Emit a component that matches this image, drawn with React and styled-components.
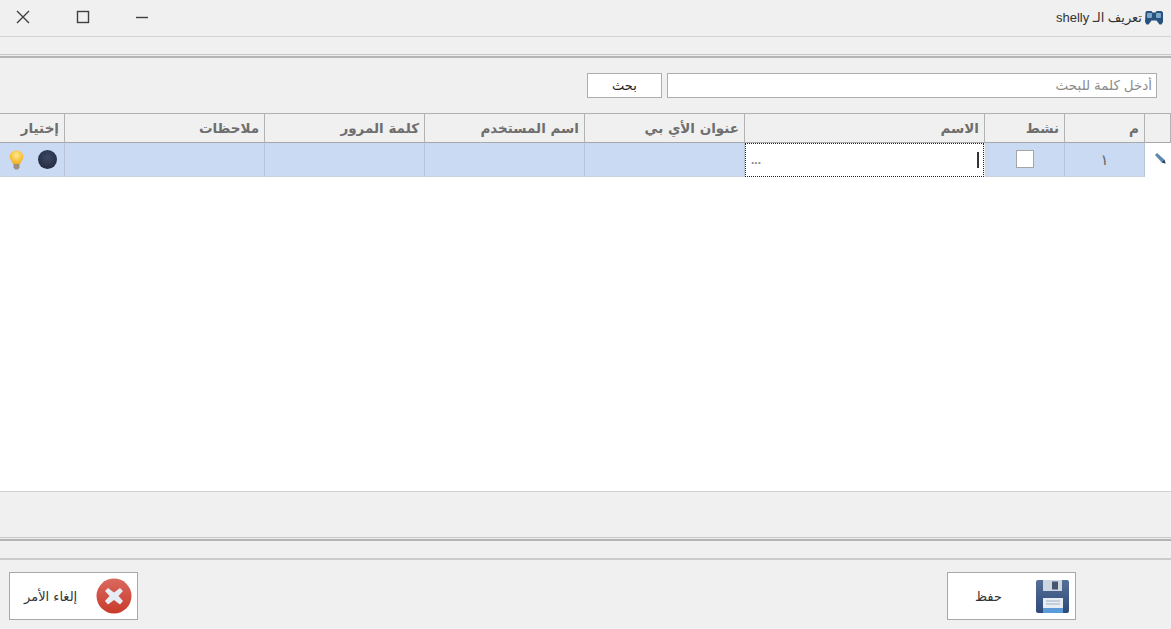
import React from "react";
import styled, { createGlobalStyle } from "styled-components";

const Global = createGlobalStyle`
  html, body { margin: 0; padding: 0; background: #f0f0f0; }
  * { box-sizing: border-box; }
  body { font-family: "DejaVu Sans", "Liberation Sans", sans-serif; }
`;

const Page = styled.div`
  width: 1171px; height: 629px; display: flex; flex-direction: column;
  background: #f0f0f0; overflow: hidden;
`;
const TitleBar = styled.div`
  height: 37px; flex: none; display: flex; align-items: center; justify-content: space-between;
  border-bottom: 1px solid #d4d4d4; padding: 0 8px 2px 15px;
`;
const WinButtons = styled.div`display: flex; gap: 44px; align-items: center;`;
const WinButton = styled.svg`width: 16px; height: 16px; display: block; fill: none; stroke: #3f3f3f; stroke-width: 1.4;`;
const Title = styled.div`
  display: flex; align-items: center; gap: 3px; font-size: 13px; color: #333;
  font-family: "Liberation Sans", "DejaVu Sans", sans-serif;
`;
const Strip = styled.div`height: ${p => p.$h}px; flex: none;`;
const DoubleRule = styled.div`
  height: 4px; flex: none; border-top: 1px solid #c8c8c8; border-bottom: 2px solid #b4b4b4; background: #ececec;
`;
const SearchBar = styled.div`
  height: 55px; flex: none; display: flex; align-items: flex-start; padding: 15px 14px 0 0;
  justify-content: flex-end; gap: 5px;
`;
const SearchButton = styled.button`
  width: 75px; height: 25px; background: #fff; border: 1px solid #adadad; padding: 0;
  font: 13px "DejaVu Sans", sans-serif; color: #222;
`;
const SearchInput = styled.input`
  width: 490px; height: 25px; background: #fff; border: 1px solid #adadad; padding: 0 4px;
  direction: rtl; font: 13.5px "Liberation Sans", "DejaVu Sans", sans-serif; color: #333;
  &::placeholder { color: #8c8c8c; opacity: 1; }
`;
const Grid = styled.div`
  flex: none; display: grid;
  grid-template-columns: 65px 200px 160px 160px 160px 240px 80px 80px 26px;
  grid-template-rows: 30px 34px;
`;
const HeaderCell = styled.div`
  border-top: 1px solid #b2b2b2; border-bottom: 1px solid #a8a8a8; border-right: 1px solid #b2b2b2;
  background: #f0f0f0; display: flex; align-items: center; justify-content: flex-start; padding: 0 5px 1px 0;
  font-size: 13.5px; font-weight: 700; color: #6e6e6e; direction: rtl;
  &:last-child { border-right: none; }
`;
const Cell = styled.div`
  background: #cbdaf3; border-right: 1px solid #b9c4d6; border-bottom: 1px solid #c9d2df;
  display: flex; align-items: center; justify-content: ${p => p.$justify || "flex-start"};
  font-size: 15px; color: #666;
`;
const RowMarker = styled.div`background: #fff; display: flex; align-items: center; padding: 0 0 3px 10px;`;
const EditCell = styled.div`
  background: #fff; border: 1px dotted #222; display: flex; align-items: center; justify-content: space-between;
  padding: 0 3px 0 5px; margin-right: 1px; font-size: 12px; font-weight: 700; color: #888; font-family: "Liberation Sans", sans-serif;
`;
const Caret = styled.span`width: 2px; height: 16px; background: #333; margin-right: 1px;`;
const CheckBox = styled.span`width: 18px; height: 18px; background: #fff; border: 1px solid #a5a5a5; display: block; margin: -1px 0 0 1px;`;
const IconsWrap = styled.div`display: flex; align-items: center; gap: 14px; padding-left: 9px; width: 100%;`;
const Blank = styled.div`height: 314px; flex: none; background: #fff;`;
const Band = styled.div`height: 46px; flex: none; border-top: 1px solid #d0d0d0;`;
const Rule = styled.div`height: 2px; flex: none; background: #cbcbcb;`;
const Footer = styled.div`flex: 1; display: flex; justify-content: space-between; align-items: flex-start; padding: 12px 95px 0 9px;`;
const ActionButton = styled.button`
  width: 129px; height: 48px; background: #fff; border: 1px solid #a8a8a8; display: flex; align-items: center;
  justify-content: space-between; padding: ${p => p.$pad}; font: 13px "DejaVu Sans", sans-serif; color: #333;
`;

const Gamepad = () => (
  <svg width="18" height="15" viewBox="0 0 18 15">
    <path d="M1.500 1h5l1 1.500h3l1-1.500h5l1.500 1.500L18 12l-1.500 2.500-2 0-3-4h-5l-3 4-2 0L0 12 .5 2.500z" fill="#27527f" />
    <rect x="2" y="3" width="5" height="5" rx="1" fill="#7fa6c9" />
    <rect x="11" y="3" width="5" height="5" rx="1" fill="#7fa6c9" />
  </svg>
);
const Pencil = () => (
  <svg width="11" height="11" viewBox="0 0 11 11">
    <path d="M0 2 2 0 9.500 6.800 10.500 10.500 6.800 9.500z" fill="#5f86ad" />
    <path d="M6.800 9.500 10.500 10.500 9.500 6.800z" fill="#2c3e5a" />
  </svg>
);
const Ball = () => (
  <svg width="19" height="19" viewBox="0 0 19 19">
    <defs><radialGradient id="ball" cx="50%" cy="40%" r="60%"><stop offset="0" stopColor="#3c4866" /><stop offset="1" stopColor="#252c40" /></radialGradient></defs>
    <circle cx="9.500" cy="9.500" r="9.500" fill="url(#ball)" />
  </svg>
);
const Bulb = () => (
  <svg width="15" height="20" viewBox="0 0 15 20">
    <defs><radialGradient id="bulb" cx="50%" cy="35%" r="65%"><stop offset="0" stopColor="#ffe98a" /><stop offset="1" stopColor="#f2ae1c" /></radialGradient></defs>
    <path d="M7.500 .5c3.800 0 6.800 2.700 6.800 6.200 0 2.800-2.300 4.500-3.300 7.300H4C3 11.200.7 9.500.7 6.700.7 3.200 3.700.5 7.500.5z" fill="url(#bulb)" />
    <path d="M4.500 14h6v3.500l-1.500 2H6l-1.500-2z" fill="#9c8f80" />
  </svg>
);
const CancelIcon = () => (
  <svg width="36" height="36" viewBox="0 0 36 36">
    <defs><linearGradient id="red" x1="0" y1="0" x2="0" y2="1"><stop offset="0" stopColor="#d9695e" /><stop offset="1" stopColor="#c93a2a" /></linearGradient></defs>
    <circle cx="18" cy="18" r="17.500" fill="url(#red)" />
    <path d="M12 10 18 14.500 24 10 27 13 22.500 18 27 23 24 26.500 18 22 12 26.500 9 23 13.500 18 9 13z" fill="#e6edf5" />
  </svg>
);
const SaveIcon = () => (
  <svg width="33" height="33" viewBox="0 0 33 33">
    <defs><linearGradient id="disk" x1="0" y1="0" x2="0" y2="1"><stop offset="0" stopColor="#556f99" /><stop offset="1" stopColor="#2f4a78" /></linearGradient></defs>
    <rect width="33" height="33" rx="2" fill="url(#disk)" />
    <rect x="7" y="0" width="19" height="11" fill="#cfd6e0" />
    <rect x="16" y="1.500" width="6" height="8" fill="#46556f" />
    <rect x="7" y="18" width="20" height="15" fill="#e9eef4" />
    <rect x="7" y="28" width="20" height="5" fill="#5b9bd8" />
    <path d="M10 21h14M10 24h14" stroke="#9fb0c4" strokeWidth="1" />
  </svg>
);

const headers = ["إختيار", "ملاحظات", "كلمة المرور", "اسم المستخدم", "عنوان الأي بي", "الاسم", "نشط", "م", ""];

export default function App() {
  return (
    <Page>
      <Global />
      <TitleBar>
        <WinButtons>
          <WinButton viewBox="0 0 16 16"><path d="M2 2l12 12M14 2 2 14" /></WinButton>
          <WinButton viewBox="0 0 16 16"><rect x="2.500" y="2.500" width="11" height="11" /></WinButton>
          <WinButton viewBox="0 0 16 16"><path d="M1 8.500h12" /></WinButton>
        </WinButtons>
        <Title><span dir="rtl">تعريف الـ shelly</span><Gamepad /></Title>
      </TitleBar>
      <Strip $h={17} />
      <DoubleRule />
      <SearchBar>
        <SearchButton>بحث</SearchButton>
        <SearchInput placeholder="أدخل كلمة للبحث" readOnly />
      </SearchBar>
      <Grid>
        {headers.map((h, i) => <HeaderCell key={i}>{h}</HeaderCell>)}
        <Cell><IconsWrap><Bulb /><Ball /></IconsWrap></Cell>
        <Cell />
        <Cell />
        <Cell />
        <Cell />
        <EditCell><span>...</span><Caret /></EditCell>
        <Cell $justify="center"><CheckBox /></Cell>
        <Cell $justify="center">١</Cell>
        <RowMarker><Pencil /></RowMarker>
      </Grid>
      <Blank />
      <Band />
      <DoubleRule />
      <Strip $h={17} />
      <Rule />
      <Footer>
        <ActionButton $pad="0 5px 0 14px"><span>إلغاء الأمر</span><CancelIcon /></ActionButton>
        <ActionButton $pad="0 6px 0 27px"><span>حفظ</span><SaveIcon /></ActionButton>
      </Footer>
    </Page>
  );
}
